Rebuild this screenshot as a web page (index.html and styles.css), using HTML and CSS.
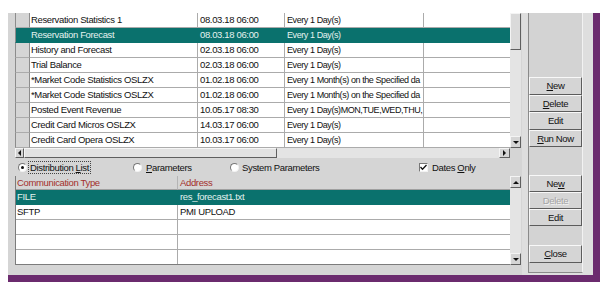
FILE: index.html
```html
<!DOCTYPE html>
<html>
<head>
<title>Report Scheduler</title>
<link rel="stylesheet" href="styles.css">
</head>
<body>
<div class="window">
  <div class="main">
    <div class="top-grid">
      <div class="grid upper">
        <div class="row"><div class="cell c-head"></div><div class="cell c-name">Reservation Statistics 1</div><div class="cell c-date">08.03.18 06:00</div><div class="cell c-freq">Every 1 Day(s)</div><div class="cell c-extra"></div></div>
        <div class="row sel"><div class="cell c-head"></div><div class="cell c-name">Reservation Forecast</div><div class="cell c-date">08.03.18 06:00</div><div class="cell c-freq">Every 1 Day(s)</div><div class="cell c-extra"></div></div>
        <div class="row"><div class="cell c-head"></div><div class="cell c-name">History and Forecast</div><div class="cell c-date">02.03.18 06:00</div><div class="cell c-freq">Every 1 Day(s)</div><div class="cell c-extra"></div></div>
        <div class="row"><div class="cell c-head"></div><div class="cell c-name">Trial Balance</div><div class="cell c-date">02.03.18 06:00</div><div class="cell c-freq">Every 1 Day(s)</div><div class="cell c-extra"></div></div>
        <div class="row"><div class="cell c-head"></div><div class="cell c-name">*Market Code Statistics OSLZX</div><div class="cell c-date">01.02.18 06:00</div><div class="cell c-freq">Every 1 Month(s) on the Specified da</div><div class="cell c-extra"></div></div>
        <div class="row"><div class="cell c-head"></div><div class="cell c-name">*Market Code Statistics OSLZX</div><div class="cell c-date">01.02.18 06:00</div><div class="cell c-freq">Every 1 Month(s) on the Specified da</div><div class="cell c-extra"></div></div>
        <div class="row"><div class="cell c-head"></div><div class="cell c-name">Posted Event Revenue</div><div class="cell c-date">10.05.17 08:30</div><div class="cell c-freq">Every 1 Day(s)MON,TUE,WED,THU,</div><div class="cell c-extra"></div></div>
        <div class="row"><div class="cell c-head"></div><div class="cell c-name">Credit Card Micros OSLZX</div><div class="cell c-date">14.03.17 06:00</div><div class="cell c-freq">Every 1 Day(s)</div><div class="cell c-extra"></div></div>
        <div class="row"><div class="cell c-head"></div><div class="cell c-name">Credit Card Opera OSLZX</div><div class="cell c-date">10.03.17 06:00</div><div class="cell c-freq">Every 1 Day(s)</div><div class="cell c-extra"></div></div>
      </div>
      <div class="vscroll">
        <div class="v-thumb"></div>
        <div class="track"></div>
        <div class="arrow"><span class="tri-down"></span></div>
      </div>
    </div>
    <div class="hscroll">
      <div class="arrow h-arrow"><span class="tri-left"></span></div>
      <div class="h-thumb"></div>
      <div class="track"></div>
      <div class="arrow h-arrow"><span class="tri-right"></span></div>
    </div>
    <div class="options">
      <div class="opt opt-dist"><span class="radio on"></span><span class="focus">Distribution <u>L</u>ist</span></div>
      <div class="opt opt-param"><span class="radio"></span><span><u>P</u>arameters</span></div>
      <div class="opt opt-sys"><span class="radio"></span><span>System Parameters</span></div>
      <div class="opt"><span class="check"><svg width="7" height="7" viewBox="0 0 7 7"><polyline points="0.5,3 2.5,5.2 6.5,1" fill="none" stroke="#111" stroke-width="1.3"/></svg></span><span>Dates <u>O</u>nly</span></div>
    </div>
    <div class="lower-wrap">
      <div class="grid lower">
        <div class="row head"><div class="cell c-type">Communication Type</div><div class="cell c-addr">Address</div></div>
        <div class="row sel"><div class="cell c-type">FILE</div><div class="cell c-addr">res_forecast1.txt</div></div>
        <div class="row"><div class="cell c-type">SFTP</div><div class="cell c-addr">PMI UPLOAD</div></div>
        <div class="row"><div class="cell c-type"></div><div class="cell c-addr"></div></div>
        <div class="row"><div class="cell c-type"></div><div class="cell c-addr"></div></div>
        <div class="row"><div class="cell c-type"></div><div class="cell c-addr"></div></div>
      </div>
      <div class="vscroll">
        <div class="arrow"><span class="tri-up"></span></div>
        <div class="track"></div>
        <div class="arrow"><span class="tri-down"></span></div>
      </div>
    </div>
  </div>
  <div class="side">
    <div class="panel">
      <div class="btn-group">
        <div class="btn tall"><u>N</u>ew</div>
        <div class="btn"><u>D</u>elete</div>
        <div class="btn tall">Edit</div>
        <div class="btn"><u>R</u>un Now</div>
      </div>
      <div class="btn-group lower-btns">
        <div class="btn">Ne<u>w</u></div>
        <div class="btn disabled">Delete</div>
        <div class="btn">Edit</div>
      </div>
      <div class="btn tall close"><u>C</u>lose</div>
    </div>
  </div>
</div>
</body>
</html>
```

FILE: styles.css
```css
body { margin: 0; background: #fff; font-family: "Liberation Sans", Arial, sans-serif; font-size: 9.5px; letter-spacing: -0.35px; color: #111; }
.window { display: flex; margin: 13px 0 0 8px; width: 585px; height: 262px; background: #d5d5d5; border-right: 7px solid #6b2b6e; border-bottom: 7px solid #6b2b6e; }
.main { width: 507px; padding-left: 7px; }

/* grids */
.top-grid { display: flex; height: 135px; }
.grid { width: 495px; background: #fff; }
.row { display: flex; height: 15px; }
.cell { box-sizing: border-box; height: 15px; line-height: 14px; padding-left: 2px; border-right: 1px solid #ababab; border-bottom: 1px solid #ababab; white-space: nowrap; overflow: hidden; }
.c-head { width: 15px; background: #d5d5d5; border-left: 1px solid #8c8c8c; border-right-color: #8c8c8c; }
.c-name { width: 168px; padding-left: 1px; }
.c-date { width: 87px; }
.c-freq { width: 139px; font-size: 9px; letter-spacing: -0.42px; }
.c-extra { width: 86px; border-right: none; }
.row.sel .cell { background: #0a716d; color: #e4f1ef; border-right-color: #0a716d; border-bottom-color: #0a716d; }
.lower { border-left: 1px solid #7c7c7c; box-sizing: border-box; height: 89px; border-bottom: 1px solid #7c7c7c; }
.c-type { width: 162px; padding-left: 1px; }
.c-addr { width: 332px; border-right: none; }
.row.head { height: 14px; }
.row.head .cell { height: 14px; line-height: 13px; background: #d5d5d5; color: #a3302c; border-bottom-color: #a0a0a0; border-right-color: #b4b4b4; }
.lower .row:last-child .cell { border-bottom: none; height: 14px; }

/* scrollbars */
.vscroll { width: 11px; display: flex; flex-direction: column; background: #e4e4e4; }
.track { flex: 1; background: #e4e4e4; }
.v-thumb { box-sizing: border-box; height: 37px; background: #dadada; border: 1px solid; border-color: #f4f4f4 #5f5f5f #5f5f5f #f4f4f4; }
.arrow { box-sizing: border-box; width: 11px; height: 12px; background: #d5d5d5; border: 1px solid; border-color: #f4f4f4 #5f5f5f #5f5f5f #f4f4f4; display: flex; align-items: center; justify-content: center; }
.hscroll { display: flex; width: 495px; height: 10px; }
.h-arrow { width: 9px; height: 10px; }
.hscroll .h-arrow:last-child { width: 11px; }
.h-thumb { box-sizing: border-box; width: 253px; background: #e2e2e2; border: 1px solid; border-color: #f6f6f6 #5f5f5f #5f5f5f #f6f6f6; }
.tri-down { border-left: 3px solid transparent; border-right: 3px solid transparent; border-top: 3px solid #111; }
.tri-up { border-left: 3px solid transparent; border-right: 3px solid transparent; border-bottom: 3px solid #111; }
.tri-left { border-top: 3px solid transparent; border-bottom: 3px solid transparent; border-right: 3px solid #111; }
.tri-right { border-top: 3px solid transparent; border-bottom: 3px solid transparent; border-left: 3px solid #111; }

/* option row */
.options { display: flex; align-items: center; height: 18px; padding-left: 3px; }
.opt { display: flex; align-items: center; gap: 3px; }
.opt-dist { width: 115px; gap: 1px; }
.opt-param { width: 97px; gap: 4px; }
.opt-sys { width: 189px; }
.radio { box-sizing: border-box; width: 9px; height: 9px; border-radius: 50%; background: #fff; border: 1px solid; border-color: #777 #f2f2f2 #f2f2f2 #777; display: flex; align-items: center; justify-content: center; }
.radio.on::after { content: ""; width: 3px; height: 3px; border-radius: 50%; background: #111; }
.focus { border: 1px dotted #444; padding: 0 1px; line-height: 11px; }
.check { box-sizing: border-box; width: 9px; height: 9px; background: #fff; border: 1px solid; border-color: #777 #f2f2f2 #f2f2f2 #777; display: flex; align-items: center; justify-content: center; margin-right: 1px; }
.lower-wrap { display: flex; height: 89px; }

/* side buttons */
.side { width: 71px; background: #dedede; }
.panel { box-sizing: border-box; margin-left: 6px; width: 55px; height: 260px; padding-top: 64px; background: #d3d3d3; border-left: 1px solid #8a8a8a; border-right: 1px solid #f2f2f2; border-bottom: 1px solid #8a8a8a; }
.btn { box-sizing: border-box; height: 17px; line-height: 15px; text-align: center; background: #d5d5d5; border: 1px solid; border-color: #f8f8f8 #5c5c5c #5c5c5c #f8f8f8; }
.btn.tall { height: 18px; line-height: 16px; }
.lower-btns { margin-top: 28px; }
.close { margin-top: 19px; }
.disabled { color: #a4a4a4; text-shadow: 1px 1px 0 #f6f6f6; }
```
